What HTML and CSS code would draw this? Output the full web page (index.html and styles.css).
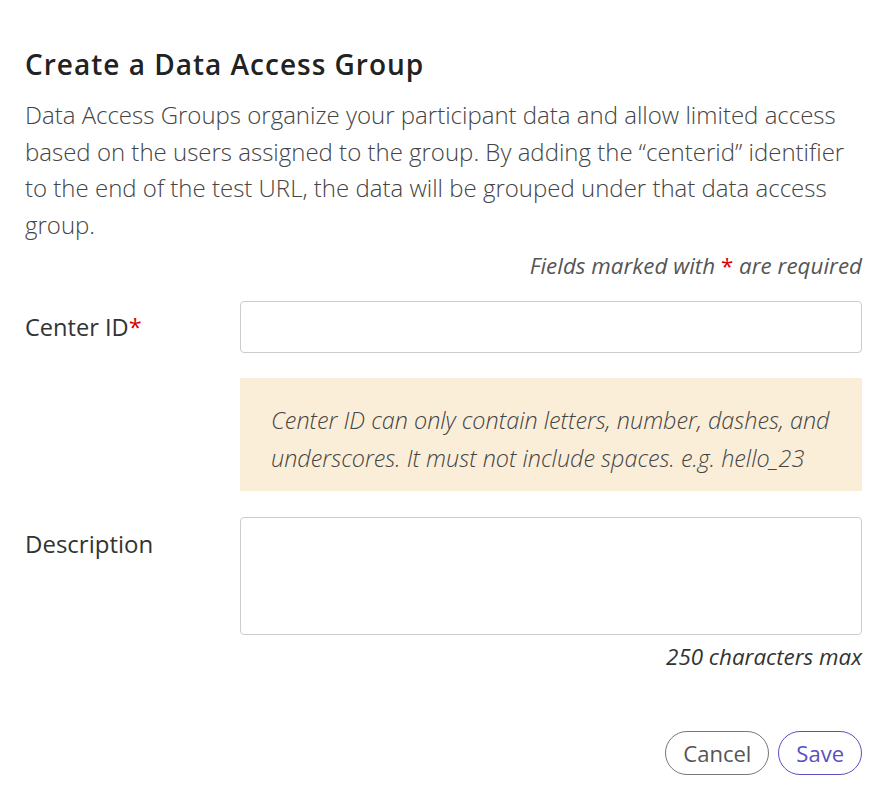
FILE: index.html
```html
<!DOCTYPE html>
<html lang="en">
<head>
    <meta charset="UTF-8">
    <meta name="viewport" content="width=device-width, initial-scale=1.0">
    <title>Create a Data Access Group</title>
    <link rel="stylesheet" href="styles.css">
</head>
<body>
    <div class="dialog">
        <h2>Create a Data Access Group</h2>
        <p class="intro">Data Access Groups organize your participant data and allow limited access based on the users assigned to the group. By adding the “centerid” identifier to the end of the test URL, the data will be grouped under that data access group.</p>
        <p class="required-note">Fields marked with <span class="star">*</span> are required</p>

        <div class="row">
            <label for="centerId" class="centered">Center ID<span class="star">*</span></label>
            <div class="field">
                <input type="text" id="centerId">
                <div class="hint">Center ID can only contain letters, number, dashes, and underscores. It must not include spaces. e.g. hello_23</div>
            </div>
        </div>

        <div class="row">
            <label for="description">Description</label>
            <div class="field">
                <textarea id="description"></textarea>
                <div class="counter">250 characters max</div>
            </div>
        </div>

        <div class="actions">
            <button class="btn cancel">Cancel</button>
            <button class="btn save">Save</button>
        </div>
    </div>
</body>
</html>
```

FILE: styles.css
```css
body {
    margin: 0;
    background: #fff;
    font-family: 'Open Sans', sans-serif;
    color: #333;
}
.dialog {
    padding: 44px 27px 20px 25px;
}
h2 {
    font-size: 28px;
    font-weight: 600;
    letter-spacing: 1px;
    color: #222;
    margin: 0;
    line-height: 40px;
}
.intro {
    font-size: 24px;
    font-weight: 300;
    color: #444;
    line-height: 36.5px;
    margin: 13px 0 0;
}
.required-note {
    font-size: 22.4px;
    font-style: italic;
    color: #555;
    text-align: right;
    margin: 7px 0 0;
    line-height: 32px;
}
.star {
    color: #d00;
    font-style: normal;
}
.row {
    display: flex;
    margin-top: 19px;
}
.row label {
    width: 215px;
    flex-shrink: 0;
    font-size: 24px;
    color: #333;
    line-height: 32px;
    padding-top: 11px;
}
.row label.centered {
    font-size: 23.6px;
    padding-top: 10px;
}
.field {
    flex: 1;
}
input[type="text"], textarea {
    display: block;
    width: 100%;
    box-sizing: border-box;
    border: 1px solid #ccc;
    border-radius: 4px;
    font-family: inherit;
    font-size: 20px;
    padding: 10px 14px;
    margin: 0;
}
input[type="text"] {
    height: 52px;
}
textarea {
    height: 118px;
    resize: none;
}
.hint {
    margin-top: 25px;
    background: #fbeed9;
    padding: 23px 24px 14px 31px;
    font-size: 23.4px;
    font-weight: 300;
    font-style: italic;
    color: #444;
    line-height: 38px;
}
.row + .row {
    margin-top: 26px;
}
.counter {
    text-align: right;
    font-size: 22.4px;
    font-style: italic;
    color: #333;
    line-height: 32px;
    margin-top: 6px;
}
.actions {
    display: flex;
    justify-content: flex-end;
    gap: 9px;
    margin-top: 58px;
}
.btn {
    height: 44px;
    border-radius: 22px;
    background: #fff;
    font-family: inherit;
    font-size: 22px;
    padding: 0 17px;
    cursor: pointer;
}
.cancel {
    border: 1px solid #777;
    color: #555;
}
.save {
    border: 1px solid #5a4fc3;
    color: #5a4fc3;
}
```
